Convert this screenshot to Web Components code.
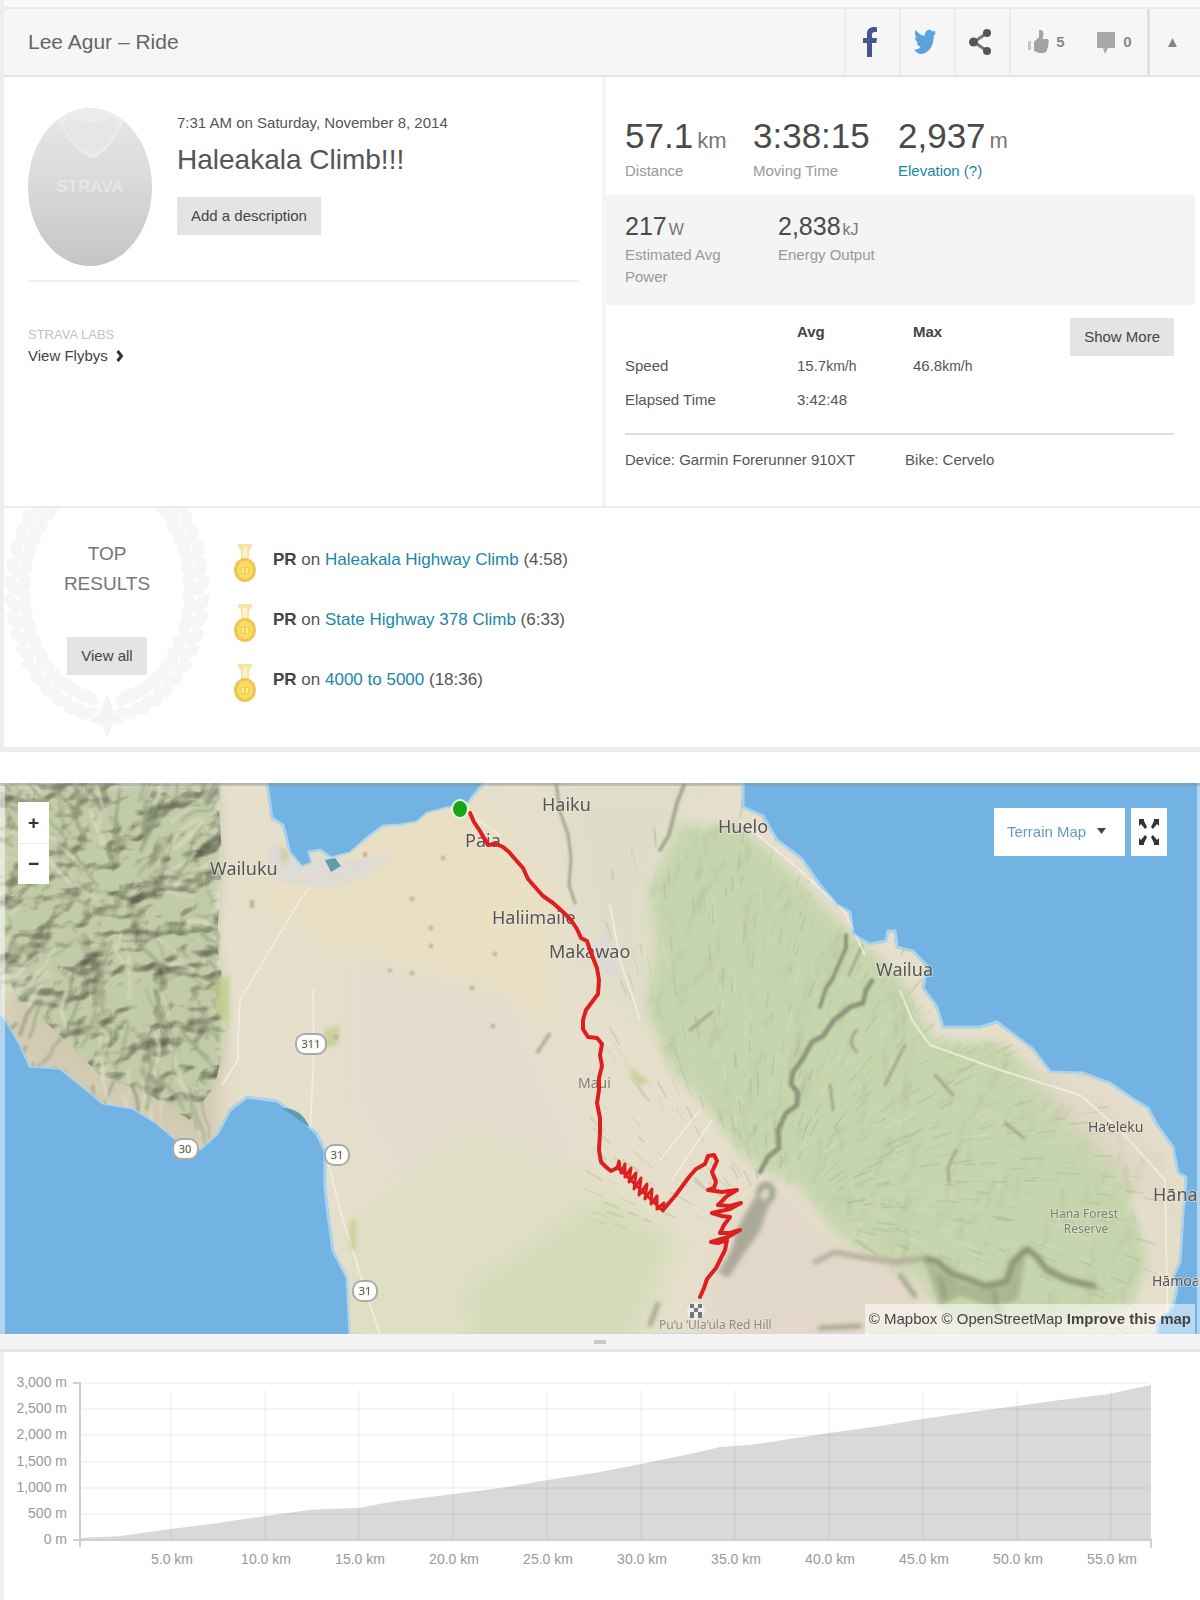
<!DOCTYPE html>
<html lang="en">
<head>
<meta charset="utf-8">
<meta name="viewport" content="width=device-width, initial-scale=1">
<title>Lee Agur – Ride</title>
<style>
html{background:#fff}
body{margin:0;font-family:"Liberation Sans",Arial,sans-serif;font-size:15px;line-height:22px;color:#555}
</style>
</head>
<body>
<activity-page></activity-page>
<script>
const define = (name, html, setup) => {
  const template = document.createElement('template');
  template.innerHTML = `<style>*{box-sizing:border-box}:host{display:block}a{color:#1a87a5;text-decoration:none}button,select{font:inherit;color:inherit;border:0;margin:0;padding:0}</style>` + html;
  customElements.define(name, class extends HTMLElement {
    constructor() {
      super();
      this.attachShadow({mode: 'open'}).append(template.content.cloneNode(true));
    }
    connectedCallback() { if (setup && !this.ready) { this.ready = true; setup(this, this.shadowRoot); } }
  });
};

define('grey-button', `<style>
:host{display:inline-block}
button{background:#e4e4e4;color:#444;padding:8px 14px;height:38px;line-height:22px;cursor:pointer}
</style><button type="button"><slot></slot></button>`);

define('stat-value', `<style>
:host{color:#555}
.v{display:flex;align-items:baseline;height:48px;font-size:35px;line-height:48px;color:#4a4a4a;white-space:nowrap}
.u{font-size:22px;color:#777;margin-left:4px}
:host([small]) .v{font-size:25px;height:36px;line-height:36px}
:host([small]) .u{font-size:16px;margin-left:2px}
.l{color:#999;line-height:22px}
</style><div class="v"><slot></slot><span class="u"></span></div><div class="l"><slot name="label"></slot></div>`,
(el, root) => { const u = root.querySelector('.u'); if (el.getAttribute('unit')) u.textContent = el.getAttribute('unit'); else u.remove(); });

define('activity-header', `<style>
header{display:flex;height:70px;background:#f6f6f6;border-top:2px solid #e9e9e9;border-bottom:2px solid #e4e4e4;align-items:stretch}
h1{flex:1;margin:0;padding-left:24px;font-size:21px;line-height:66px;font-weight:400;color:#666}
nav{display:flex}
button{background:none;display:flex;align-items:center;justify-content:center;gap:7px;width:55px;padding-right:5px;border-left:2px solid #ececec;color:#888;font-weight:700;font-size:15px;cursor:pointer}
.like{width:72px;padding:0}.talk{width:66px;border:0;padding:0}.up{width:53px;border-left:3px solid #e0e0e0}
svg{display:block;flex:none}
</style>
<header><h1>Lee Agur – Ride</h1><nav>
<button type="button" aria-label="Facebook"><svg width="14" height="30" viewBox="0 0 14 30"><path fill="#46558a" d="M4 30V16H0v-5h4V7c0-5 3-7 7-7 1 0 2 0 3 .4V5h-2c-2.500 0-3 1-3 3v3h5l-.7 5H9v14z"/></svg></button>
<button type="button" aria-label="Twitter"><svg width="22" height="26" viewBox="0 0 22 24" preserveAspectRatio="none"><path fill="#5aa3dc" d="M22 3c-.8.4-1.700.7-2.300.8 1-.6 1.500-1.500 1.800-2.500-.9.500-1.900.9-2.900 1.100C17.700 1.300 16.600.8 15.300.8c-2.700 0-4.600 2.500-4.300 5.500C7.200 6.100 3.900 4 1.600 1c-1.200 2.200-.8 5.300 1.400 6.900-.7 0-1.400-.2-2-.6 0 2.500 1.500 4.800 3.600 5.300-.7.200-1.300.2-2 .1.600 2 2.200 3.600 4.200 3.600C4.900 18.200 2.500 19.400 0 19.100 2 21.500 4.400 23 7 23c8.200 0 12.900-8.400 12.700-16.500C20.600 5.700 21.400 4.400 22 3z"/></svg></button>
<button type="button" aria-label="Share"><svg width="22" height="28" viewBox="0 0 22 28"><path d="M18 5L5 14l13 9" fill="none" stroke="#777" stroke-width="3"/><circle cx="18" cy="5" r="4" fill="#555"/><circle cx="4.500" cy="14" r="4.500" fill="#555"/><circle cx="18" cy="23" r="4" fill="#555"/></svg></button>
<button type="button" class="like" aria-label="Give kudos"><svg width="22" height="26" viewBox="0 0 22 26"><path fill="#c4c4c4" d="M1 12h3v9H1z"/><path fill="#a3a3a3" d="M7 13l5-5V1h3c2 3 1.500 6 .5 9H21c1 1 1 2 .3 3.500.7 1 .5 2-.3 3 .4 1 .2 2-.8 3 .2 2-1 4-3.200 4.500h-5L7 22z"/></svg><span>5</span></button>
<button type="button" class="talk" aria-label="Comments"><svg width="20" height="25" viewBox="0 0 20 25"><path fill="#a8a8a8" d="M1 2h18v16h-7l-3 6-2-6H1z"/></svg><span>0</span></button>
<button type="button" class="up" aria-label="Collapse"><svg width="9" height="9" viewBox="0 0 9 9"><path fill="#888" d="M4.500 0L9 9H0z"/></svg></button>
</nav></header>`);

define('athlete-panel', `<style>
:host{padding:0 24px}
.top{display:flex;gap:25px;padding:31px 0 14px;border-bottom:2px solid #f0f0f0}
.av{flex:none;display:block}
.t{padding-top:4px}
h2{margin:6px 0 17px;font-size:28px;line-height:40px;font-weight:400;color:#555}
.labs{padding-top:43px}
.labs small{display:block;font-size:13px;line-height:20px;color:#c3c3c3}
.labs a{display:flex;align-items:center;gap:8px;color:#444;line-height:22px}
</style>
<div class="top">
<svg class="av" width="124" height="158" viewBox="0 0 124 158" role="img" aria-label="Athlete">
<defs><linearGradient id="g" x1="0" y1="0" x2="0" y2="1"><stop offset="0" stop-color="#e8e8e8"/><stop offset=".45" stop-color="#dadada"/><stop offset="1" stop-color="#c5c5c5"/></linearGradient><clipPath id="c"><ellipse cx="62" cy="79" rx="62" ry="79"/></clipPath></defs>
<g clip-path="url(#c)"><rect width="124" height="158" fill="url(#g)"/><path fill="#ececec" d="M34 0h55l6 14c-10 20-20 34-30 36-14-4-26-18-35-38z"/><path fill="#e6e6e6" d="M40 8q22 14 44 0l6 10c-8 16-16 26-27 28-12-4-20-14-28-28z"/></g>
<text x="62" y="84" font-size="17" font-weight="700" fill="#e6e6e6" text-anchor="middle">STRAVA</text></svg>
<div class="t"><div>7:31 AM on Saturday, November 8, 2014</div><h2>Haleakala Climb!!!</h2><grey-button>Add a description</grey-button></div>
</div>
<div class="labs"><small>STRAVA LABS</small><a href="#flybys">View Flybys <svg width="8" height="14" viewBox="0 0 8 14"><path d="M1.500 2l4 5-4 5" fill="none" stroke="#333" stroke-width="3"/></svg></a></div>`);

define('stats-panel', `<style>
:host{border-left:4px solid #f5f5f5}
.main{display:grid;grid-template-columns:128px 145px auto;justify-content:start;padding:35px 18px 12px 19px;height:118px}
.power{display:flex;gap:47px;background:#f4f4f4;margin-right:5px;padding:13px 19px;height:110px}
.power stat-value{width:106px}
.more{display:flex;align-items:flex-start;justify-content:space-between;margin:0 26px 0 19px;padding-top:10px;height:130px;border-bottom:2px solid #ddd}
grey-button{margin-top:3px}
table{border-collapse:collapse;table-layout:fixed;width:390px}
td,th{padding:6px 0;height:34px;text-align:left;font-weight:400}
thead th{font-weight:700;color:#444}
td span{font-size:14px}
th:first-child{width:172px}th:nth-child(2){width:116px}
.gear{display:flex;gap:50px;padding:14px 19px 34px}
</style>
<div class="main"><stat-value unit="km">57.1<span slot="label">Distance</span></stat-value><stat-value>3:38:15<span slot="label">Moving Time</span></stat-value><stat-value unit="m">2,937<a slot="label" href="#elevation">Elevation (?)</a></stat-value></div>
<div class="power"><stat-value small unit="W">217<span slot="label">Estimated Avg Power</span></stat-value><stat-value small unit="kJ">2,838<span slot="label">Energy Output</span></stat-value></div>
<div class="more"><table><thead><tr><th></th><th scope="col">Avg</th><th scope="col">Max</th></tr></thead><tbody><tr><th scope="row">Speed</th><td>15.7<span>km/h</span></td><td>46.8<span>km/h</span></td></tr><tr><th scope="row">Elapsed Time</th><td>3:42:48</td><td></td></tr></tbody></table><grey-button>Show More</grey-button></div>
<div class="gear"><span>Device: Garmin Forerunner 910XT</span><span>Bike: Cervelo</span></div>`);

define('result-row', `<style>
:host{display:flex;align-items:center;gap:16px;height:60px;font-size:17px;line-height:24px;color:#555}
span{padding-bottom:6px}
b{color:#444}svg{flex:none}
</style><svg width="24" height="42" viewBox="0 0 24 42"><path fill="#f6e5a8" d="M5 2h14v3l-3 4v9H8V9L5 5z"/><path fill="#fdf4d2" d="M10 6h4v11h-4z"/><ellipse cx="12" cy="28" rx="11" ry="12" fill="#ecc755"/><ellipse cx="12" cy="28" rx="8" ry="9" fill="#fbdc62"/><path fill="#f5cc4c" d="M8 25h8v7H8z"/><path stroke="#fff0a0" stroke-width="2" d="M10 26v5m4-5v5"/></svg><span><b>PR</b> on <slot></slot></span>`);

define('top-results', `<style>
:host{display:flex;height:241px;border-top:2px solid #ececec}
.side{position:relative;width:206px;flex:none;text-align:center;padding:31px 0 0}
.laurel{position:absolute;left:0;top:0}
h3{position:relative;margin:0 0 38px;font-weight:400;font-size:19px;line-height:30px;color:#777}
grey-button{position:relative}
.list{padding:25px 0 0 23px}
</style>
<div class="side"><svg class="laurel" width="206" height="230" viewBox="0 0 206 230" aria-hidden="true"><g id="l" fill="#f6f6f6"></g><path fill="#f4f4f4" d="M103 186l8 20 11 8-14 2-5 14-5-14-14-2 11-8z"/></svg><h3>TOP<br>RESULTS</h3><grey-button>View all</grey-button></div>
<div class="list"><result-row><a href="#s1">Haleakala Highway Climb</a> (4:58)</result-row><result-row><a href="#s2">State Highway 378 Climb</a> (6:33)</result-row><result-row><a href="#s3">4000 to 5000</a> (18:36)</result-row></div>`,
(el, root) => {
  let leaves = '';
  for (const side of [1, -1]) for (let k = 0; k < 17; k++) {
    const a = (78 - k * 8) * Math.PI / 180;
    for (const r of [0, 1]) {
      const x = 103 + side * Math.cos(a) * (r ? 95 : 83), y = 82 + Math.sin(a) * (r ? 126 : 110);
      const turn = side * (r ? 30 : -25) + side * (Math.atan2(128 * Math.cos(a), -97 * Math.sin(a)) * 180 / Math.PI - 90) + 90;
      leaves += `<ellipse cx="${x.toFixed(1)}" cy="${y.toFixed(1)}" rx="11" ry="6" transform="rotate(${turn.toFixed(0)} ${x.toFixed(1)} ${y.toFixed(1)})"/>`;
    }
  }
  root.querySelector('#l').innerHTML = leaves;
});

const COAST = 'M0 783H267L272 818 283 825 290 853 302 867 312 863 309 852 320 850 331 858 350 853 367 838 383 826 400 825 417 822 427 813 447 808 467 805 473 796 484 783H743V807L763 816 777 840 802 859 820 885 837 905 850 912 853 934 862 940 870 944 886 941 888 931H895L897 947 913 951 927 966 923 988 937 1007 943 1027H980L997 1022 1013 1034 1033 1049 1050 1072 1083 1073 1110 1083 1133 1099 1148 1108 1157 1125 1173 1147 1178 1173 1186 1177 1183 1214 1180 1262 1173 1277 1177 1288 1173 1306 1157 1323V1335H350L347 1277 333 1251 328 1214 325 1188V1151L317 1134 300 1118 277 1101 247 1097 230 1110 217 1134 200 1149 177 1140 157 1123 133 1108 103 1103 80 1084 60 1068 30 1066 20 1044 5 1018 0 1014z';
const WEST = 'M0 783H218L222 860 217 940 226 1010 225 1040 215 1085 190 1120 150 1095 100 1075 60 1035 20 1000 0 965z';
const FOREST = 'M680 824L742 826 790 870 842 925 900 975 935 1040 1000 1042 1060 1090 1110 1130 1165 1160 1130 1200 1150 1260 1130 1310 1050 1325H960L920 1290 840 1240 800 1190 745 1160 700 1100 670 1070 645 1010 655 950 648 890z';

define('route-map', `<style>
:host{position:relative;overflow:hidden;line-height:20px}
.map{display:block;width:100%;height:auto}
.map text{font-family:"Noto Sans","Open Sans",sans-serif;fill:#555;paint-order:stroke;stroke:#eee9dc;stroke-width:2px;stroke-opacity:.6}
.relief{mix-blend-mode:multiply}
.zoom{position:absolute;left:18px;top:19px;width:31px;display:flex;flex-direction:column}
.zoom button{height:41px;background:#fff;font-weight:700;font-size:19px;color:#333;cursor:pointer}
.zoom button+button{border-top:1px solid #eee}
.tools{position:absolute;right:33px;top:25px;display:flex;gap:6px}
.tools label{position:relative;display:block;width:131px;height:48px}
select{appearance:none;width:100%;height:100%;background:#fff;padding-left:13px;color:#5f9fbd}
label svg{position:absolute;right:19px;top:20px;pointer-events:none}
.tools button{width:36px;height:48px;background:#fff;display:grid;place-items:center}
.credit{position:absolute;right:5px;bottom:0;padding:6px 4px;background:rgba(255,255,255,.5);line-height:18px}
.credit a{color:#444}
</style>
<svg class="map" viewBox="0 783 1200 551" role="img" aria-label="Route map of Maui">
<defs><clipPath id="land"><path d="${COAST}"/></clipPath><clipPath id="wc"><path d="${WEST}"/></clipPath><clipPath id="fc"><path d="${FOREST}"/></clipPath>
<filter id="soft" x="-10%" y="-10%" width="120%" height="120%"><feGaussianBlur stdDeviation="10"/></filter><filter id="s1" x="-10%" y="-10%" width="120%" height="120%"><feGaussianBlur stdDeviation="1"/></filter><filter id="s2" x="-10%" y="-10%" width="120%" height="120%"><feGaussianBlur stdDeviation="2"/></filter><filter id="s5" x="-10%" y="-10%" width="120%" height="120%"><feGaussianBlur stdDeviation="5"/></filter>
<filter id="relief" x="0" y="0" width="100%" height="100%" color-interpolation-filters="sRGB"><feTurbulence type="fractalNoise" baseFrequency=".022 .03" numOctaves="3" seed="4"/><feColorMatrix values="0 0 0 0 0 0 0 0 0 0 0 0 0 0 0 1.600 0 0 0 -.3"/><feDiffuseLighting surfaceScale="11" diffuseConstant="1.250" lighting-color="#fffff6"><feDistantLight azimuth="225" elevation="55"/></feDiffuseLighting></filter>
<filter id="fine" x="0" y="0" width="100%" height="100%" color-interpolation-filters="sRGB"><feTurbulence type="fractalNoise" baseFrequency=".03 .02" numOctaves="3" seed="9"/><feColorMatrix values="0 0 0 0 0 0 0 0 0 0 0 0 0 0 0 1.400 0 0 0 -.2"/><feDiffuseLighting surfaceScale="5" diffuseConstant="1.200" lighting-color="#fffff8"><feDistantLight azimuth="225" elevation="60"/></feDiffuseLighting></filter></defs>
<rect y="783" width="1200" height="551" fill="#72b3e4"/>
<path d="${COAST}" fill="#e6dfcc" stroke="#a9d3ea" stroke-width="3"/>
<g clip-path="url(#land)">
<g filter="url(#soft)">
<path fill="#e9dfc3" d="M230 900L470 790 550 900 560 1010 440 1040 300 920z"/>
<path fill="#e3ddce" d="M340 950L520 1000 600 1180 420 1230 340 1100z"/>
<path fill="#dfdfc4" d="M350 1220L470 1130 600 1180 690 1240 650 1340H350z"/>
<path fill="#d3dab9" d="M470 1290L600 1200 670 1240 630 1340H470z"/>
<path fill="#dedec8" d="M560 783H700L650 900 650 1030 590 980z"/>
<path fill="#d3cab2" d="M0 990L70 1000 150 1080 220 1030 220 1150H100L0 1040z"/>
</g>
<path fill="#c7d5ae" filter="url(#s5)" d="${FOREST}"/>
<g filter="url(#soft)"><path fill="#e2d8c9" d="M720 1240L780 1180 830 1240 920 1280 930 1340H700z"/><path fill="#e2d8c7" d="M1020 1060L1100 1090 1150 1140 1180 1190 1165 1300 1150 1200 1060 1110z"/></g>
<path fill="#c2cba8" filter="url(#s5)" d="${WEST}"/>
<g class="relief" clip-path="url(#wc)" opacity=".5"><rect y="783" width="230" height="340" filter="url(#relief)"/></g>
<g id="west" fill="none" stroke-linecap="round" filter="url(#s1)"></g>
<g id="east" fill="none" stroke-linecap="round"></g>
<g class="relief" clip-path="url(#fc)" opacity=".14"><rect x="640" y="820" width="540" height="514" filter="url(#fine)"/></g>
<g fill="none" stroke="#a3aa8e" stroke-linecap="round" stroke-linejoin="round" filter="url(#s1)">
<path stroke-width="3" d="M556 783L560 812 568 834 571 858 569 885 575 903"/><path stroke-width="4" d="M684 785L677 803 669 835 660 850"/>
<path stroke="#8c977d" stroke-width="5" d="M872 981L866 990 863 1003 850 1007 842 1014 834 1020 823 1036 812 1042 802 1060 793 1072 791 1084 798 1093 797 1105 786 1113 778 1130 779 1148 768 1157 760 1172"/>
<path stroke="#8c977d" stroke-width="4" d="M846 935L846 948 838 966 832 980 826 988 820 1007"/><path stroke-width="3" d="M862 946L849 975M857 1030Q846 1042 857 1052M956 1150L948 1168 949 1182M905 1045L885 1085M935 1075L953 1095M1005 1123L1024 1138M830 1085L833 1110M690 1030L712 1012"/>
</g>
<g fill="none" stroke-linecap="round" stroke-linejoin="round" filter="url(#s2)">
<path stroke="#a1a590" stroke-width="6" d="M759 1192Q762 1182 770 1186 776 1194 768 1202"/>
<path fill="#a9a998" stroke="#b0af9f" stroke-width="3" d="M757 1196L768 1204 758 1232 745 1250 728 1276 720 1272 733 1250 738 1230z"/>
<path stroke="#b0ac98" stroke-width="5" d="M815 1262L835 1252 860 1257 895 1262 927 1258"/>
<path stroke="#87936f" stroke-width="6" d="M927 1259L938 1262 950 1273 968 1279 985 1286 1006 1282 1013 1262 1027 1249 1036 1256 1047 1270 1068 1280 1093 1286"/>
<path fill="#98a37d" d="M925 1262L950 1278 985 1290 1008 1286 1016 1264 1026 1256 1018 1300 990 1306 960 1296 940 1306z" opacity=".6"/>
<path stroke="#97a07f" stroke-width="4" d="M900 1275L915 1296M940 1276L945 1298M994 1292L998 1312M650 1325L658 1304M820 1328L860 1326"/>
</g>
<g fill="none" stroke="#f2eee5" stroke-width="2" stroke-opacity=".8"><path d="M238 1040L240 1000 270 950 300 900 340 850M310 1134L314 1050 313 990M222 1085L238 1060 238 1040M325 1150L340 1210 365 1290 380 1334M740 820L800 870 845 912 865 955M900 990L912 1020 930 1045 1000 1070 1080 1095 1120 1130 1165 1180 1168 1334M470 815L500 835M610 905L620 960 640 1020M700 1110L660 1160M712 1120L672 1180"/><path stroke="#dcd8cb" stroke-width="1" d="M330 900L480 980M400 870L540 1010M430 1000L500 1080M480 1150L430 1330M520 1100L460 1320M640 930L650 1010 625 1060M470 880L520 930 560 945"/></g>
<g fill="#dcdad9" opacity=".8" filter="url(#s2)"><path d="M270 845L340 862 395 852 375 870 330 890 270 880zM590 945L608 930 618 965 608 985z"/></g>
<g fill="#bccb84" opacity=".7" filter="url(#s2)"><path d="M325 1030L340 1025 338 1045 322 1048zM215 980L230 975 228 1030 218 1010zM628 1066L650 1082 636 1086zM280 845L290 855 282 865zM350 1220h6v30h-6z"/></g>
<g stroke="#aaa98f" stroke-width="4" opacity=".8" filter="url(#s1)"><path d="M537 1053L550 1033M441 858h4M410 899h4M429 928h4M429 946h4M493 954h4M410 973h4M470 988h4M491 1026h4M390 969v3M365 852v5M252 900v8M336 1035v4"/></g>
</g>
<path fill="#5f9cae" d="M282 1108Q302 1108 309 1127L299 1120zM325 860l10-2 6 8-10 6z"/>
<g>
<text x="542" y="811" font-size="18">Haiku</text><text x="718" y="833" font-size="18">Huelo</text><text x="210" y="875" font-size="18">Wailuku</text><text x="465" y="847" font-size="18">Paia</text><text x="492" y="924" font-size="18">Haliimaile</text><text x="549" y="958" font-size="18">Makawao</text><text x="876" y="976" font-size="18">Wailua</text>
<text x="1088" y="1132" font-size="14">Ha‘eleku</text><text x="1153" y="1201" font-size="18">Hāna</text><text x="1152" y="1286" font-size="14">Hāmoa</text><text x="578" y="1088" font-size="14" opacity=".7">Maui</text><text x="1084" y="1218" font-size="12" text-anchor="middle" opacity=".65">Hana Forest</text><text x="1086" y="1233" font-size="12" text-anchor="middle" opacity=".65">Reserve</text><text x="659" y="1329" font-size="12" opacity=".6">Pu‘u ‘Ula‘ula Red Hill</text>
</g>
<g fill="#fff" stroke="#aaa" stroke-width="2"><rect x="296" y="1034" width="30" height="20" rx="9"/><rect x="173" y="1139" width="25" height="20" rx="9"/><rect x="325" y="1145" width="24" height="20" rx="9"/><rect x="353" y="1281" width="24" height="20" rx="9"/></g>
<g text-anchor="middle" font-size="11"><text x="311" y="1048">311</text><text x="185" y="1153">30</text><text x="337" y="1159">31</text><text x="365" y="1295">31</text></g>
<g fill="none" stroke="#dd1f1f" stroke-linejoin="round" stroke-linecap="round"><path stroke-width="4" d="M470 813L474 822 480 831 484 838 488 845 496 844 503 847 509 852 515 859 523 868 528 879 535 887 543 896 553 903 563 912 571 920 577 929 581 938 587 941 590 950 593 958 597 968 599 980 598 994 592 1002 586 1010 583 1020 583 1029 588 1037 597 1038 602 1044 600 1055 602 1066 599 1078 599 1090 597 1103 600 1118 600 1133 599 1150 601 1162 606 1167 611 1171 617 1168"/>
<path stroke-width="4" d="M663 1210L675 1196 689 1177 696 1169 705 1164 708 1156 714 1155 717 1161 712 1172 716 1182 714 1188 708 1190 722 1192 737 1190 727 1196 718 1205 730 1206 741 1203 730 1209 712 1213 722 1216 730 1217 724 1225 720 1233 730 1233 740 1230 728 1237 711 1242 718 1243 727 1240 725 1250 720 1260 716 1268 707 1279 704 1288 700 1297"/>
<path stroke-width="3" d="M617 1168L619 1161 621 1173 625 1164 625 1177 631 1168 629 1182 636 1173 634 1189 641 1178 639 1195 647 1184 645 1199 652 1189 651 1204 657 1196 657 1209 664 1203 663 1211 619 1169"/></g>
<ellipse cx="460" cy="809" rx="8" ry="9" fill="#16a616" stroke="#e8f6e4" stroke-width="2"/>
<circle cx="696" cy="1311" r="9" fill="#eee"/><path fill="#777" d="M690 1304h4v4h-4zM698 1304h4v4h-4zM694 1308h4v4h-4zM690 1312h4v6h-4zM698 1312h4v6h-4z"/>
<path fill="#fff" opacity=".45" d="M0 783h5v551H0zM1197 783h3v551h-3z"/><path fill="#888" opacity=".35" d="M0 783h1200v3H0z"/>
</svg>
<div class="zoom"><button type="button" aria-label="Zoom in">+</button><button type="button" aria-label="Zoom out">−</button></div>
<div class="tools"><label><select aria-label="Map type"><option>Terrain Map</option></select><svg width="9" height="6" viewBox="0 0 9 6"><path fill="#444" d="M0 0h9L4.500 6z"/></svg></label><button type="button" aria-label="Full screen"><svg width="22" height="28" viewBox="0 0 22 28"><path fill="#333" d="M1 1h5v2l3 6-2 2-4-5-2 2zM21 1h-5v2l-3 6 2 2 4-5 2 2zM1 27h5v-2l3-6-2-2-4 5-2-2zM21 27h-5v-2l-3-6 2-2 4 5 2-2z"/></svg></button></div>
<div class="credit"><a href="#mapbox">© Mapbox</a> <a href="#osm">© OpenStreetMap</a> <a href="#improve"><b>Improve this map</b></a></div>`,
(el, root) => {
  let seed = 7;
  const rnd = () => (seed = (seed * 16807) % 2147483647) / 2147483647;
  /* Valleys radiate from the summit of the western range, as branching shaded ridges. */
  let west = '';
  const tones = ['#8d9878', '#a0aa89', '#d6dcc0', '#dee1cb', '#98a382'];
  for (let i = 0; i < 330; i++) {
    const a = rnd() * Math.PI * 2, r = 12 + Math.sqrt(rnd()) * 180;
    let x = 118 + Math.cos(a) * r, y = 905 + Math.sin(a) * r * 1.15;
    if (x > 214 || y > 1110 || y < 783) continue;
    let d = `M${x.toFixed(0)} ${y.toFixed(0)}`, dir = a + (rnd() - .5) * .4;
    for (let k = 0; k < 4; k++) {
      dir += (rnd() - .5) * .7;
      x = Math.min(218, x + Math.cos(dir) * 9); y += Math.sin(dir) * 10;
      d += `L${x.toFixed(0)} ${y.toFixed(0)}`;
    }
    west += `<path d="${d}" stroke="${tones[i % 5]}" stroke-width="${2 + i % 3}" opacity=".6"/>`;
  }
  root.querySelector('#west').innerHTML = west;
  /* Fine gullies run down the volcano's flanks away from the crater. */
  let east = '';
  for (let i = 0; i < 900; i++) {
    const a = -Math.PI + rnd() * Math.PI * 1.1, r = 60 + rnd() * 370;
    const x = 790 + Math.cos(a) * r, y = 1230 + Math.sin(a) * r;
    if (x < 600) continue;
    const t = a + .25, n = 6 + rnd() * 16;
    east += `<path d="M${x.toFixed(0)} ${y.toFixed(0)}l${(Math.cos(t) * n).toFixed(0)} ${(Math.sin(t) * n).toFixed(0)}" stroke="${i % 3 ? '#a9b88e' : '#dbe3c5'}" opacity=".35" stroke-width="${1 + i % 2}"/>`;
  }
  root.querySelector('#east').innerHTML = east;
});

define('elevation-chart', `<style>
.grip{height:18px;background:#f4f4f4;border-bottom:3px solid #e6e6e6;display:flex;align-items:center;justify-content:center}
.grip i{width:12px;height:4px;background:#c8c8c8}
svg{display:block;width:100%;height:auto}
text{font-size:14px;fill:#999}
</style><div class="grip"><i></i></div>
<svg viewBox="0 1352 1200 248" role="img" aria-label="Elevation profile"><path fill="#d9d9d9" d="M79 1538L120 1536 171 1529 218 1523 265 1516 310 1510 325 1509 359 1508 390 1502 454 1494 500 1488 548 1480 600 1472 641 1464 690 1454 720 1447 735 1446 750 1445 829 1433 880 1426 923 1419 970 1412 1017 1406 1060 1400 1109 1394 1151 1385V1541H79z"/><g id="grid"></g><path fill="none" stroke="#d0d0d0" stroke-width="2" d="M73 1383h7v164M73 1540h1078v8"/><path fill="#f0f0f0" d="M0 1352h4v248H0z"/></svg>`,
(el, root) => {
  let s = '';
  ['3,000 m', '2,500 m', '2,000 m', '1,500 m', '1,000 m', '500 m', '0 m'].forEach((t, i) => {
    const y = 1383 + Math.round(i * 26.2);
    s += `<path d="M80 ${y}H1150" stroke="#000" opacity=".035" stroke-width="2"/><text x="67" y="${y + 4}" text-anchor="end">${t}</text>`;
  });
  for (let k = 1; k < 12; k++) {
    const x = 77 + k * 94;
    s += `<path d="M${x} 1390V1540" stroke="#000" opacity=".035" stroke-width="2"/><text x="${x + 1}" y="1564" text-anchor="middle">${k * 5}.0 km</text>`;
  }
  root.querySelector('#grid').innerHTML = s;
});

define('activity-page', `<style>
:host{background:#fff}
.card{border:solid #eee;border-width:0 0 5px 4px}
.lead{height:7px;background:#f9f9f9}
.cols{display:grid;grid-template-columns:minmax(0,1fr) minmax(0,1fr);min-height:429px}
route-map{margin-top:31px}
</style>
<div class="card"><div class="lead"></div><activity-header></activity-header><div class="cols"><athlete-panel></athlete-panel><stats-panel></stats-panel></div><top-results></top-results></div>
<route-map></route-map><elevation-chart></elevation-chart>`);
</script>
</body>
</html>
